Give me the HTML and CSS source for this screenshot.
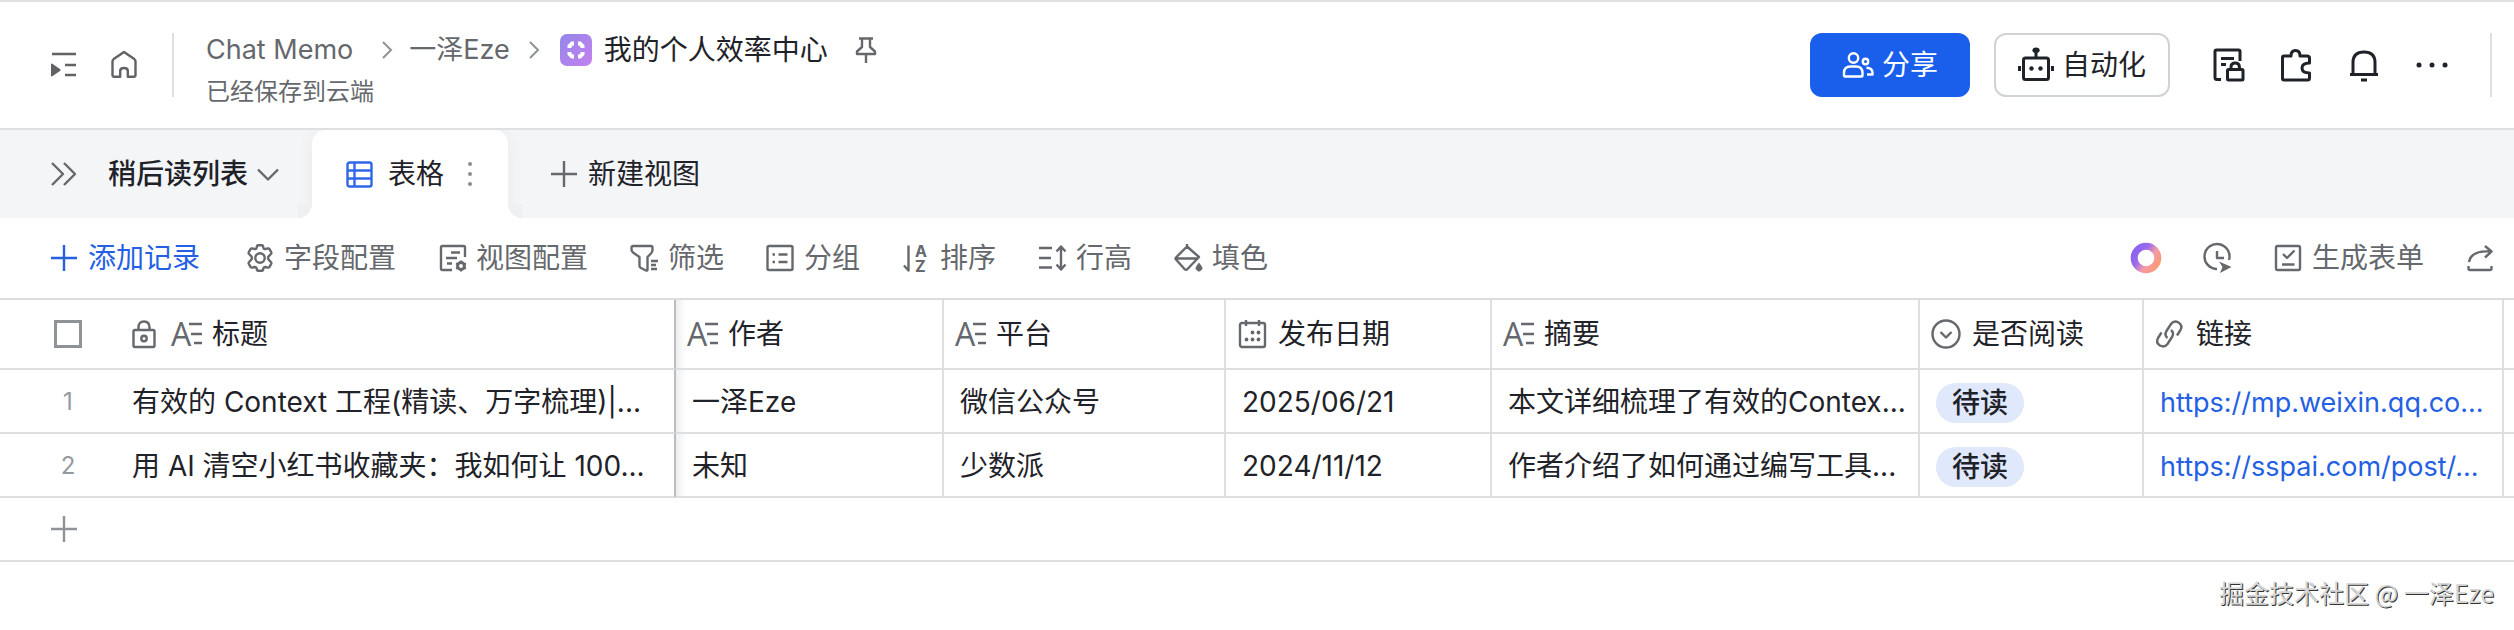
FILE: index.html
```html
<!DOCTYPE html>
<html lang="zh-CN">
<head>
  <meta charset="utf-8">
  <title>我的个人效率中心</title>
  <link rel="stylesheet" href="styles.css">
</head>
<body>
  <svg class="sprite" aria-hidden="true">
    <symbol id="i-plus" viewBox="0 0 28 28">
      <path d="M14 1v26M1 14h26" fill="none" stroke="currentColor" stroke-width="2.4"/>
    </symbol>
    <symbol id="i-next" viewBox="0 0 12 20">
      <path d="M2 2l8 8-8 8" fill="none" stroke="currentColor" stroke-width="2"/>
    </symbol>
  </svg>

  <header class="header">
    <nav class="nav-icons">
      <button class="icon-btn" aria-label="展开目录">
        <svg class="icon" viewBox="0 0 32 32"><path d="M4 5h24M17 16h11M17 26h11" stroke-width="2.6"/><path class="fill" d="M3 15.500q0-1.500 1.300-.7l8 5.400q.9.800 0 1.600l-8 5.400q-1.300.8-1.300-.7z"/></svg>
      </button>
      <button class="icon-btn" aria-label="主页">
        <svg class="icon" viewBox="0 0 32 32"><path d="M4.500 12.500q0-1.500 1.200-2.400L16 3l10.300 7.100q1.200.9 1.200 2.400V26q0 1.800-1.800 1.800h-5.900V22q0-3-3.800-3t-3.800 3v5.800H6.300q-1.800 0-1.800-1.800z"/></svg>
      </button>
    </nav>
    <span class="divider"></span>
    <div class="title-block">
      <nav class="breadcrumb">
        <a href="#">Chat Memo</a>
        <svg class="sep sep-wide"><use href="#i-next"/></svg>
        <a href="#">一泽Eze</a>
        <svg class="sep"><use href="#i-next"/></svg>
        <svg class="app-logo" viewBox="0 0 32 32">
          <defs><linearGradient id="logo" x1="0" y1="0" x2="1" y2="1"><stop offset="0" stop-color="#9286ea"/><stop offset="1" stop-color="#c582ef"/></linearGradient></defs>
          <rect width="32" height="32" rx="7" fill="url(#logo)"/>
          <path d="M9.500 14v-2l2.500-2.500h2M18 9.500h2l2.500 2.500v2M22.500 18v2L20 22.500h-2M14 22.500h-2L9.500 20v-2" fill="none" stroke="#fff" stroke-width="4"/>
        </svg>
        <h1>我的个人效率中心</h1>
        <button class="icon-btn pin" aria-label="固定">
          <svg class="icon" viewBox="0 0 32 32"><path d="M9 4.500h14M12 5v8l-5 4.500V20h18v-2.500L20 13V5M16 20v9"/></svg>
        </button>
      </nav>
      <p class="save-state">已经保存到云端</p>
    </div>
    <div class="actions">
      <button class="btn btn-primary">
        <svg class="icon" viewBox="0 0 32 32"><circle cx="11.500" cy="9" r="4.700"/><path d="M2 26.500v-2.500q0-6.500 6.500-6.500h5.500q6.500 0 6.500 6.500v2.500q0 1-1 1H3q-1 0-1-1z"/><circle cx="23.500" cy="12.500" r="2.700"/><path d="M24.500 18.800q6 .2 6 5v1.700h-5.500"/></svg>
        分享
      </button>
      <button class="btn btn-outline">
        <svg class="icon icon-robot" viewBox="0 0 36 36"><rect x="5.500" y="11" width="25" height="21.500" rx="2"/><path d="M18 5v6M1.500 19v5M34.500 19v5"/><ellipse class="fill" cx="18" cy="3.300" rx="3.600" ry="2.700"/><circle class="fill" cx="13.500" cy="21.500" r="2.200"/><circle class="fill" cx="22.500" cy="21.500" r="2.200"/></svg>
        自动化
      </button>
      <div class="tools">
        <button class="icon-btn" aria-label="权限">
          <svg class="icon" viewBox="0 0 32 32"><path d="M9 30.500H5q-2 0-2-2v-26Q3 1 4.500 1h22Q28 1 28 2.500V12M9 9.500h13M9 15.500h5"/><rect x="15.500" y="20.500" width="15.500" height="10.500" rx="1"/><path d="M19 20.500V18q0-4 4.200-4t4.200 4v2.500"/></svg>
        </button>
        <button class="icon-btn" aria-label="插件">
          <svg class="icon" viewBox="0 0 32 32"><path d="M2.500 8.500q0-1.500 1.500-1.500h7q0-5.500 4.500-5.500T20 7h7q2.500 0 2.500 2v5q-7.500 0-7.500 5t7.500 5v5q0 2-2 2H4q-1.500 0-1.500-1.500z"/></svg>
        </button>
        <button class="icon-btn" aria-label="通知">
          <svg class="icon" viewBox="0 0 32 32"><path d="M2 25.500h28M5 25V13.500Q5 3 16 3t11 10.500V25M16 3V1.500M13 31h6"/></svg>
        </button>
        <button class="icon-btn" aria-label="更多">
          <svg class="icon" viewBox="0 0 32 32"><g class="fill"><circle cx="3" cy="16" r="2.500"/><circle cx="16" cy="16" r="2.500"/><circle cx="29" cy="16" r="2.500"/></g></svg>
        </button>
      </div>
      <span class="divider"></span>
    </div>
  </header>

  <div class="tabbar">
    <button class="table-name">
      <svg class="icon expand" viewBox="0 0 32 32"><path d="M4 5l11 11L4 27M16 5l11 11-11 11"/></svg>
      <span>稍后读列表</span>
      <svg class="icon caret" viewBox="0 0 24 24"><path d="M2 7.500l10 10 10-10"/></svg>
    </button>
    <div class="tab">
      <button class="tab-main">
        <svg class="icon grid-icon" viewBox="0 0 32 32"><rect x="3.500" y="4.500" width="24" height="24" rx="2"/><path d="M10.500 4.500v24M3.500 12.500h24M3.500 20.500h24"/></svg>
        表格
      </button>
      <button class="tab-more" aria-label="视图菜单">
        <svg viewBox="0 0 16 32"><circle cx="8" cy="6" r="2"/><circle cx="8" cy="16" r="2"/><circle cx="8" cy="26" r="2"/></svg>
      </button>
    </div>
    <button class="new-view">
      <svg class="plus"><use href="#i-plus"/></svg>
      新建视图
    </button>
  </div>

  <div class="toolbar">
    <button class="tool tool-add"><svg class="icon" viewBox="0 0 28 28"><use href="#i-plus"/></svg>添加记录</button>
    <button class="tool">
      <svg class="icon" viewBox="0 0 28 28"><path d="M10.700 3.500Q11 1.300 12 1.300h4q1 0 1.300 2.200.3 1.700 2 1.500l2.500-.6q1.200-.1 1.700.8l1.700 3q.5 1-.3 1.800l-1.600 1.700q-1.300 1.300-1.300 2.300t1.300 2.300l1.600 1.700q.8.800.3 1.800l-1.700 3q-.5.900-1.700.8l-2.500-.6q-1.700-.2-2 1.500-.3 2.200-1.300 2.200h-4q-1 0-1.300-2.200-.3-1.700-2-1.500l-2.500.6q-1.200.1-1.700-.8l-1.700-3q-.5-1 .3-1.800l1.600-1.700Q6 15 6 14t-1.300-2.300L3.100 10q-.8-.8-.3-1.800l1.700-3q.5-.9 1.700-.8l2.500.6q1.700.2 2-1.500z"/><circle cx="14" cy="14" r="4.700"/></svg>
      字段配置
    </button>
    <button class="tool">
      <svg class="icon" viewBox="0 0 28 28"><path d="M14 26H4.500Q3 26 3 24.500v-21Q3 2 4.500 2h21Q27 2 27 3.500V13M13 8.500h9M8 14h11M9 19.500h5"/><circle cx="23" cy="22" r="3.400" stroke-width="3"/><path d="M23 16.500v2M23 25.500v2M18 19.300l2 1M26 23.700l2 1M18 24.700l2-1M26 20.300l2-1" stroke-width="2"/></svg>
      视图配置
    </button>
    <button class="tool">
      <svg class="icon" viewBox="0 0 28 28"><path d="M3 2h18q1.500 0 1.500 2v2q0 2-1.500 3.500L17.500 13v12.500q0 1.500-1.500 1l-5-2.500q-1.500-.8-1.500-2V13L3 8.500Q1.500 7 1.500 5.500V4Q1.500 2 3 2zM21 17h7M21 21h5M21 25h6"/></svg>
      筛选
    </button>
    <button class="tool">
      <svg class="icon" viewBox="0 0 28 28"><rect x="1.500" y="2" width="25" height="24" rx="1.500"/><path d="M6.500 10.500h2.500M12.500 10.500h9M6.500 18h2.500M12.500 18h9"/></svg>
      分组
    </button>
    <button class="tool">
      <svg class="icon" viewBox="0 0 28 28"><path d="M6.500 1.500v25L2 21.500"/><text x="13" y="13" class="az">A</text><text x="13" y="28" class="az">Z</text></svg>
      排序
    </button>
    <button class="tool">
      <svg class="icon" viewBox="0 0 28 28"><path d="M1 4h13M1 14h12M1 23.500h13M23 3v22M18.500 7.500L23 2.500l4.500 5M18.500 20.500l4.500 5 4.500-5"/></svg>
      行高
    </button>
    <button class="tool">
      <svg class="icon" viewBox="0 0 28 28"><path d="M13 0v2.500L2 13.500q-1 1 0 2l8.500 9.500q1.500 1.500 3 0l11.500-12L13 2.500M2 14.500h22.500"/><path class="fill" d="M25 18.500q-3.500 4.500-3.500 6t3.500 3.200q3.500-1.700 3.500-3.200t-3.500-6z"/></svg>
      填色
    </button>

    <div class="toolbar-right">
      <button class="icon-btn" aria-label="AI 助手">
        <svg class="icon" viewBox="0 0 32 32">
          <defs><linearGradient id="ring" x1="0" y1=".1" x2="1" y2=".8"><stop offset="0" stop-color="#8a63f2"/><stop offset=".35" stop-color="#9a6bea"/><stop offset=".65" stop-color="#f29aa8"/><stop offset="1" stop-color="#fb9a78"/></linearGradient></defs>
          <circle cx="16" cy="16" r="11.800" stroke="url(#ring)" stroke-width="7"/>
        </svg>
      </button>
      <button class="icon-btn" aria-label="历史记录">
        <svg class="icon" viewBox="0 0 32 32"><path d="M15 27A12.500 12.500 0 1 1 27 18M15 9v7h7"/><path class="fill" d="M17 19.500l12.500 5.500L18 31l2.500-6z"/></svg>
      </button>
      <button class="tool">
        <svg class="icon" viewBox="0 0 28 28"><rect x="2" y="2" width="24" height="24" rx="1.500"/><path d="M9 10l4 4 7.500-7.500M8 20.500h12.500"/></svg>
        生成表单
      </button>
      <button class="icon-btn" aria-label="分享视图">
        <svg class="icon" viewBox="0 0 32 32"><path d="M5 20Q7 8.500 26 9.500M21 4l6.500 5.500-6.500 6M4.500 24v2.500q0 1.500 1.500 1.500h20q1.500 0 1.500-1.500V24"/></svg>
      </button>
    </div>
  </div>

  <table class="grid">
    <colgroup>
      <col class="c-no"><col class="c-title"><col class="c-author"><col class="c-platform">
      <col class="c-date"><col class="c-summary"><col class="c-read"><col class="c-link"><col>
    </colgroup>
    <thead>
      <tr>
        <th class="no"><input type="checkbox" aria-label="全选"></th>
        <th class="title frozen"><div class="field">
          <svg class="lock" viewBox="0 0 24 28"><path d="M3 10h18q1.500 0 1.500 1.500v14q0 1.500-1.500 1.500H3q-1.500 0-1.500-1.500v-14Q1.500 10 3 10zM6.500 10V7.500q0-6 5.500-6t5.500 6V10"/><circle cx="12" cy="18.500" r="2.700"/></svg>
          <svg class="field-icon" viewBox="0 0 32 28"><path d="M19 4h13M21 14h11M24 23h8"/><text x="1" y="26">A</text></svg>标题</div></th>
        <th><div class="field"><svg class="field-icon" viewBox="0 0 32 28"><path d="M19 4h13M21 14h11M24 23h8"/><text x="1" y="26">A</text></svg>作者</div></th>
        <th><div class="field"><svg class="field-icon" viewBox="0 0 32 28"><path d="M19 4h13M21 14h11M24 23h8"/><text x="1" y="26">A</text></svg>平台</div></th>
        <th><div class="field"><svg class="field-icon" viewBox="0 0 32 28"><rect x="4" y="3" width="25" height="24" rx="2"/><path d="M10 0v6M23 0v6"/><g class="fill"><circle cx="16.500" cy="12.500" r="1.900"/><circle cx="22.500" cy="12.500" r="1.900"/><circle cx="10.500" cy="19.500" r="1.900"/><circle cx="16.500" cy="19.500" r="1.900"/><circle cx="22.500" cy="19.500" r="1.900"/></g></svg>发布日期</div></th>
        <th><div class="field"><svg class="field-icon" viewBox="0 0 32 28"><path d="M19 4h13M21 14h11M24 23h8"/><text x="1" y="26">A</text></svg>摘要</div></th>
        <th><div class="field"><svg class="field-icon" viewBox="0 0 32 28"><circle cx="16" cy="14" r="13.500"/><path d="M10.500 12l5.500 5.500 5.500-5.500"/></svg>是否阅读</div></th>
        <th><div class="field"><svg class="field-icon" viewBox="0 0 32 28"><path d="M13.500 18q-3.500-3-1-7l4.500-7q3-4 7.500-1.500 4.500 3 2 7.500l-3.500 5.500M17 10q3.500 3 1 7l-4.500 7q-3 4-7.500 1.500-4.500-3-2-7.500l3.500-5.500"/></svg>链接</div></th>
        <th></th>
      </tr>
    </thead>
    <tbody>
      <tr>
        <td class="no">1</td>
        <td class="title frozen">有效的 Context 工程(精读、万字梳理)|...</td>
        <td>一泽Eze</td>
        <td>微信公众号</td>
        <td>2025/06/21</td>
        <td>本文详细梳理了有效的Contex...</td>
        <td><span class="tag">待读</span></td>
        <td><a href="#">https://mp.weixin.qq.co...</a></td>
        <td></td>
      </tr>
      <tr>
        <td class="no">2</td>
        <td class="title frozen">用 AI 清空小红书收藏夹：我如何让 100...</td>
        <td>未知</td>
        <td>少数派</td>
        <td>2024/11/12</td>
        <td>作者介绍了如何通过编写工具...</td>
        <td><span class="tag">待读</span></td>
        <td><a href="#">https://sspai.com/post/...</a></td>
        <td></td>
      </tr>
    </tbody>
  </table>
  <button class="add-row" aria-label="添加行"><svg class="plus"><use href="#i-plus"/></svg></button>

  <footer class="watermark">掘金技术社区 @ 一泽Eze</footer>
</body>
</html>
```
FILE: styles.css
```css
* { box-sizing: border-box; }
body {
  margin: 0;
  background: #fff;
  color: #1f2329;
  font-family: Inter, 'Noto Sans CJK SC', sans-serif;
  font-size: 28px;
  line-height: 40px;
}
h1, p { margin: 0; }
a { text-decoration: none; }
button {
  display: flex;
  align-items: center;
  padding: 0;
  border: 0;
  background: none;
  color: inherit;
  font: inherit;
  white-space: nowrap;
}
svg { display: block; flex: none; }
.sprite { position: absolute; width: 0; height: 0; }
.icon, .lock, .field-icon {
  fill: none;
  stroke: currentColor;
  stroke-width: 2.4;
  stroke-linejoin: round;
  overflow: visible;
}
.icon { width: 32px; height: 32px; }
.fill { fill: currentColor; stroke: none; }
.plus { width: 28px; height: 28px; }

/* header */
.header {
  display: flex;
  align-items: center;
  height: 130px;
  padding: 0 22px 0 48px;
  border-top: 2px solid #e0e0e1;
  border-bottom: 2px solid #dee0e3;
}
.nav-icons { display: flex; gap: 28px; color: #606266; }
.divider { width: 2px; height: 64px; background: #dedfe1; }
.nav-icons + .divider { margin: 0 32px; }
.title-block { padding-top: 10px; }
.breadcrumb {
  display: flex;
  align-items: center;
  height: 44px;
  white-space: nowrap;
}
.breadcrumb a { color: #65686c; font-size: 27px; }
.breadcrumb h1 { margin-left: 12px; font-size: 28px; font-weight: 400; }
.sep { width: 12px; height: 20px; margin: 0 20px 0 18px; color: #8f9296; }
.sep-wide { margin: 0 16px 0 28px; }
.app-logo { width: 32px; height: 32px; }
.pin { margin-left: 22px; color: #65686c; }
.save-state { font-size: 24px; color: #65686c; }
.actions { display: flex; align-items: center; margin-left: auto; }
.btn {
  justify-content: center;
  height: 64px;
  padding: 0 32px;
  border-radius: 12px;
  gap: 8px;
}
.btn-primary { background: #1a5eec; color: #fff; }
.btn-outline { margin-left: 24px; padding: 0 22px; border: 2px solid #d0d3d6; }
.icon-robot { width: 36px; height: 36px; stroke-width: 3; }
.tools { display: flex; gap: 36px; margin: 0 42px; }
.tools .icon { stroke-width: 3; }

/* view tabs */
.tabbar { display: flex; height: 88px; background: #f3f5f7; overflow: hidden; }
.table-name { width: 312px; padding-left: 48px; font-weight: 500; }
.expand { margin-right: 28px; color: #65686c; }
.caret { width: 24px; height: 24px; margin-left: 8px; color: #65686c; }
.tab {
  position: relative;
  display: flex;
  align-items: center;
  width: 196px;
  padding-left: 32px;
  border-radius: 14px 14px 0 0;
  background: #fff;
  box-shadow: 0 0 18px rgba(31, 35, 41, 0.05);
}
.tab::before, .tab::after {
  content: "";
  position: absolute;
  bottom: 0;
  width: 14px;
  height: 14px;
}
.tab::before { left: -14px; background: radial-gradient(circle at 0 0, #eff0f2 14px, #fff 14px); }
.tab::after { right: -14px; background: radial-gradient(circle at 100% 0, #eff0f2 14px, #fff 14px); }
.tab-main { gap: 12px; }
.grid-icon { color: #2f67e8; }
.tab-more { width: 16px; margin-left: 18px; }
.tab-more svg { width: 16px; height: 32px; fill: #8a8d91; }
.new-view { margin-left: 42px; gap: 10px; }
.new-view .plus { color: #65686c; }

/* toolbar */
.toolbar {
  display: flex;
  align-items: center;
  height: 80px;
  padding: 0 18px 0 50px;
  gap: 42px;
  color: #65686c;
}
.tool { gap: 10px; }
.tool .icon { width: 28px; height: 28px; }
.tool-add { margin-right: 4px; color: #2460e3; }
.az {
  fill: currentColor;
  stroke: none;
  font-size: 16px;
  font-weight: 700;
}
.toolbar-right { display: flex; align-items: center; gap: 40px; margin-left: auto; }

/* records */
.grid {
  width: 100%;
  table-layout: fixed;
  border-collapse: separate;
  border-spacing: 0;
  border-top: 2px solid #dcdddf;
}
.c-no { width: 132px; }
.c-title { width: 544px; }
.c-author { width: 268px; }
.c-platform { width: 282px; }
.c-date { width: 266px; }
.c-summary { width: 428px; }
.c-read { width: 224px; }
.c-link { width: 360px; }
.grid th, .grid td {
  height: 64px;
  padding: 2px 0 0 16px;
  border-right: 2px solid #dedfe1;
  border-bottom: 2px solid #dedfe1;
  font-weight: 400;
  text-align: left;
  white-space: nowrap;
}
.grid th { height: 70px; padding: 0 0 0 10px; }
.grid th:last-child, .grid td:last-child { border-right: 0; padding: 0; }
.grid .no {
  padding-left: 4px;
  border-right: 0;
  color: #96999d;
  font-size: 24px;
  text-align: center;
}
.grid .title { padding-left: 0; }
.grid .frozen { border-right-color: #bbbdc0; }
.grid .frozen + * {
  background: linear-gradient(to right, #eeeff0, #fff 10px);
}
.no input {
  appearance: none;
  display: block;
  width: 28px;
  height: 28px;
  margin: 0 auto;
  border: 3px solid #8f9296;
}
.field { display: flex; align-items: center; gap: 10px; }
.field-icon { width: 32px; height: 28px; color: #65686c; }
.field-icon text {
  fill: currentColor;
  stroke: none;
  font-family: 'Open Sans', sans-serif;
  font-size: 32px;
}
.lock { width: 24px; height: 28px; margin-right: 4px; color: #65686c; }
.tag {
  display: inline-block;
  padding: 0 16px;
  border-radius: 20px;
  background: #e0e8fc;
  font-weight: 500;
  vertical-align: middle;
}
.grid a { color: #2460e3; font-size: 27px; }
.add-row {
  width: 100%;
  height: 64px;
  padding-left: 50px;
  border-bottom: 2px solid #dedfe1;
  color: #8f9296;
}

.watermark {
  padding: 12px 20px 0;
  color: #d6d6d6;
  font-family: 'Noto Sans CJK SC', sans-serif;
  font-size: 25px;
  line-height: 36px;
  text-align: right;
  text-shadow: 1px 1px 0 #333;
}
```
